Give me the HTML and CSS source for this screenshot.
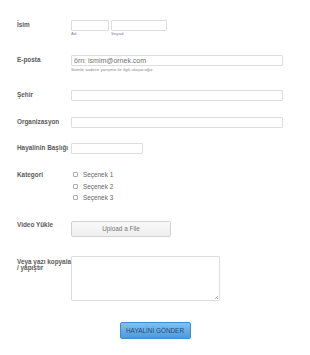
FILE: index.html
```html
<!DOCTYPE html>
<html lang="tr">
<head>
    <meta charset="UTF-8">
    <title>Yarışma Formu</title>
    <link rel="stylesheet" href="styles.css">
</head>
<body>
    <form class="form">
        <div class="row row-name">
            <label class="label">İsim</label>
            <div class="field">
                <div class="pair">
                    <div class="sub">
                        <input type="text" class="input input-first">
                        <span class="sublabel">Ad</span>
                    </div>
                    <div class="sub">
                        <input type="text" class="input input-last">
                        <span class="sublabel">Soyad</span>
                    </div>
                </div>
            </div>
        </div>

        <div class="row row-email">
            <label class="label">E-posta</label>
            <div class="field">
                <input type="text" class="input input-wide" placeholder="örn: ismim@ornek.com">
                <span class="hint">Sizinle sadece yarışma ile ilgili ulaşacağız.</span>
            </div>
        </div>

        <div class="row row-city">
            <label class="label">Şehir</label>
            <div class="field"><input type="text" class="input input-wide"></div>
        </div>

        <div class="row row-org">
            <label class="label">Organizasyon</label>
            <div class="field"><input type="text" class="input input-wide"></div>
        </div>

        <div class="row row-title">
            <label class="label">Hayalinin Başlığı</label>
            <div class="field"><input type="text" class="input input-short"></div>
        </div>

        <div class="row row-cat">
            <label class="label label-cat">Kategori</label>
            <div class="field options">
                <div class="option"><span class="box"></span>Seçenek 1</div>
                <div class="option"><span class="box"></span>Seçenek 2</div>
                <div class="option"><span class="box"></span>Seçenek 3</div>
            </div>
        </div>

        <div class="row row-video">
            <label class="label label-video">Video Yükle</label>
            <div class="field"><button type="button" class="upload">Upload a File</button></div>
        </div>

        <div class="row row-text">
            <label class="label label-text">Veya yazı kopyala / yapıştır</label>
            <div class="field text-wrap"><textarea class="textarea"></textarea></div>
        </div>

        <div class="submit-row">
            <button type="submit" class="submit">HAYALİNİ GÖNDER</button>
        </div>
    </form>
</body>
</html>
```

FILE: styles.css
```css
body {
    margin: 0;
    padding: 0;
    background-color: #fff;
    font-family: "Liberation Sans", Arial, sans-serif;
    color: #555;
}
.form {
    padding: 20px 0 0 17px;
}
.row {
    display: flex;
    align-items: flex-start;
}
.label {
    width: 54px;
    flex-shrink: 0;
    font-size: 6.4px;
    font-weight: bold;
    line-height: 8px;
    padding-top: 1px;
    color: #5a5a5a;
}
.field {
    display: flex;
    flex-direction: column;
}
.pair {
    display: flex;
    gap: 2px;
}
.sub {
    display: flex;
    flex-direction: column;
}
.input {
    box-sizing: border-box;
    height: 11px;
    border: 1px solid #ddd;
    border-radius: 1px;
    padding: 0 2px;
    margin: 0;
    font-family: "Liberation Sans", Arial, sans-serif;
    font-size: 7px;
    color: #555;
    background: #fff;
}
.input::placeholder {
    color: #707070;
}
.input-first {
    width: 38px;
}
.input-last {
    width: 56px;
}
.input-wide {
    width: 212px;
}
.input-short {
    width: 72px;
}
.sublabel {
    font-size: 4.4px;
    line-height: 6px;
    color: #888;
}
.hint {
    font-size: 4.4px;
    line-height: 6px;
    margin-top: 1px;
    color: #888;
}
.row-email {
    margin-top: 18px;
}
.row-city {
    margin-top: 17px;
}
.row-org {
    margin-top: 16px;
}
.row-title {
    margin-top: 15px;
}
.row-cat {
    margin-top: 15px;
}
.label-cat {
    padding-top: 2px;
}
.options {
    padding-left: 2px;
}
.option {
    display: flex;
    align-items: center;
    height: 11.5px;
    font-size: 6.4px;
    color: #666;
}
.box {
    box-sizing: border-box;
    width: 5px;
    height: 5px;
    border: 1px solid #aaa;
    border-radius: 1px;
    margin-right: 5px;
}
.row-video {
    margin-top: 17px;
}
.label-video {
    padding-top: 0;
}
.upload {
    box-sizing: border-box;
    width: 100px;
    height: 16px;
    margin: 0;
    padding: 0;
    border: 1px solid #d2d2d2;
    border-radius: 2px;
    background: linear-gradient(#f9f9f9, #eeeeee);
    font-family: "Liberation Sans", Arial, sans-serif;
    font-size: 6.4px;
    color: #777;
}
.row-text {
    margin-top: 19px;
}
.label-text {
    padding-top: 3px;
    line-height: 6.6px;
}
.text-wrap {
    position: relative;
}
.text-wrap::after {
    content: "";
    position: absolute;
    right: 2px;
    bottom: 2px;
    width: 3px;
    height: 3px;
    background: linear-gradient(135deg, transparent 45%, #bbb 45%, #bbb 60%, transparent 60%, transparent 75%, #bbb 75%);
}
.textarea {
    box-sizing: border-box;
    width: 149px;
    height: 45px;
    margin: 0;
    border: 1px solid #ddd;
    border-radius: 1px;
    resize: none;
}
.submit-row {
    display: flex;
    justify-content: center;
    margin-top: 21px;
    padding-right: 17px;
}
.submit {
    box-sizing: border-box;
    width: 71px;
    height: 17px;
    margin: 0;
    padding: 0;
    border: 1px solid #3f8ad0;
    border-radius: 2px;
    background: linear-gradient(#80c0f0, #4b9ade);
    box-shadow: 0 1px 1px rgba(0, 0, 0, 0.15);
    font-family: "Liberation Sans", Arial, sans-serif;
    font-size: 6.4px;
    color: #264a70;
}
```
